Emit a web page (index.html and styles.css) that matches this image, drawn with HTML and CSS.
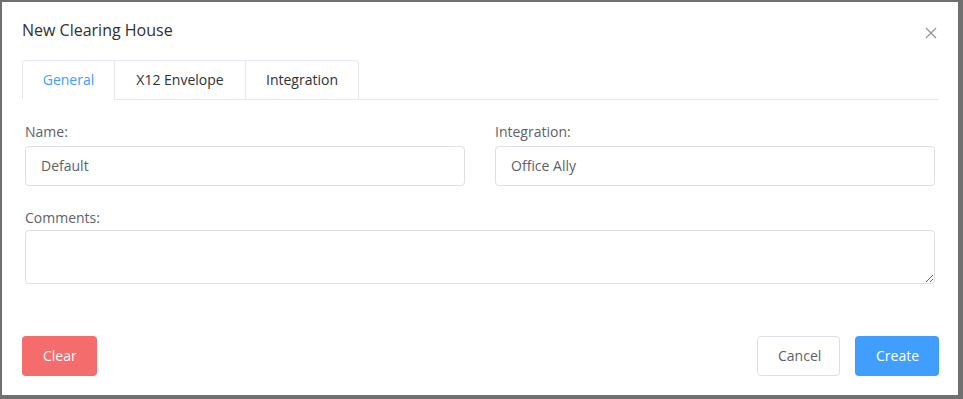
FILE: index.html
```html
<!DOCTYPE html>
<html lang="en">
<head>
  <meta charset="UTF-8">
  <meta name="viewport" content="width=device-width, initial-scale=1.0">
  <title>New Clearing House</title>
  <link rel="stylesheet" href="styles.css">
</head>
<body>
  <div class="dialog">
    <div class="dialog-header">
      <span class="dialog-title">New Clearing House</span>
      <button class="dialog-close" aria-label="Close">
        <svg width="12" height="12" viewBox="0 0 12 12">
          <path d="M1 1L11 11M11 1L1 11" stroke="#909399" stroke-width="1.2" fill="none"/>
        </svg>
      </button>
    </div>

    <div class="tabs">
      <div class="tab active">General</div>
      <div class="tab">X12 Envelope</div>
      <div class="tab">Integration</div>
    </div>

    <form class="form">
      <div class="form-row">
        <div class="form-item">
          <label>Name:</label>
          <input type="text" value="Default">
        </div>
        <div class="form-item">
          <label>Integration:</label>
          <input type="text" value="Office Ally">
        </div>
      </div>
      <div class="form-item comments">
        <label>Comments:</label>
        <textarea></textarea>
      </div>
    </form>

    <div class="dialog-footer">
      <button class="btn btn-danger">Clear</button>
      <div class="footer-right">
        <button class="btn btn-default">Cancel</button>
        <button class="btn btn-primary">Create</button>
      </div>
    </div>
  </div>
</body>
</html>
```

FILE: styles.css
```css
body {
  margin: 0;
  background-color: #707070;
  font-family: "Open Sans", "Liberation Sans", sans-serif;
  height: 399px;
  overflow: hidden;
}
.dialog {
  margin: 2px 5px 0 2px;
  height: 393px;
  background-color: #fff;
  box-sizing: border-box;
  padding: 0 19px 0 20px;
}
.dialog-header {
  display: flex;
  justify-content: space-between;
  align-items: center;
  padding-top: 17px;
  height: 39px;
  box-sizing: border-box;
}
.dialog-title {
  font-size: 16px;
  color: #303133;
}
.dialog-close {
  background: none;
  border: none;
  padding: 0;
  margin: 6px 2px 0 0;
  width: 12px;
  height: 12px;
  display: flex;
}
.tabs {
  display: flex;
  margin-top: 19px;
  border-bottom: 1px solid #e4e7ed;
  height: 39px;
}
.tab {
  height: 40px;
  box-sizing: border-box;
  border: 1px solid #e4e7ed;
  border-left: none;
  font-size: 14px;
  color: #303133;
  display: flex;
  align-items: center;
  justify-content: center;
  padding-bottom: 2px;
}
.tab:first-child {
  border-left: 1px solid #e4e7ed;
  border-top-left-radius: 4px;
  width: 93px;
}
.tab:nth-child(2) {
  width: 131px;
}
.tab:last-child {
  border-top-right-radius: 4px;
  width: 113px;
}
.tab.active {
  color: #409eff;
  border-bottom-color: #fff;
}
.form {
  padding: 0 4px 0 3px;
  margin-top: 22px;
}
.form-row {
  display: grid;
  grid-template-columns: 1fr 1fr;
  gap: 30px;
}
.form-item {
  display: flex;
  flex-direction: column;
  margin-bottom: 24px;
}
.form-row .form-item {
  margin-bottom: 22px;
}
.form-item label {
  font-size: 14px;
  color: #606266;
  line-height: 20px;
  margin-bottom: 4px;
}
.form-item.comments label {
  margin-bottom: 2px;
}
.form-item input,
.form-item textarea {
  font-family: inherit;
  font-size: 14px;
  color: #606266;
  border: 1px solid #dcdfe6;
  border-radius: 4px;
  box-sizing: border-box;
  padding: 0 15px 1px;
  outline: none;
}
.form-item input {
  height: 40px;
}
.form-item textarea {
  height: 54px;
  resize: vertical;
  padding: 5px 15px;
}
.dialog-footer {
  display: flex;
  justify-content: space-between;
  margin-top: 52px;
}
.footer-right {
  display: flex;
  gap: 15px;
}
.btn {
  height: 40px;
  font-family: inherit;
  font-size: 14px;
  border-radius: 4px;
  border: 1px solid transparent;
  padding: 0 20px 2px;
  cursor: pointer;
}
.btn-danger {
  background-color: #f56c6c;
  color: #fff;
  width: 75px;
}
.btn-default {
  background-color: #fff;
  border-color: #dcdfe6;
  color: #606266;
  width: 83px;
}
.btn-primary {
  background-color: #409eff;
  color: #fff;
  width: 84px;
}
```
